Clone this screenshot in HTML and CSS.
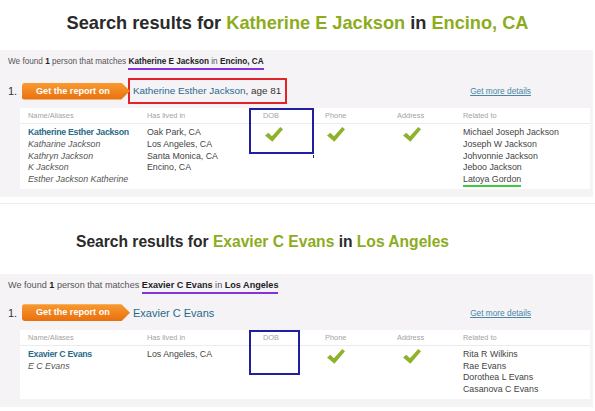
FILE: index.html
```html
<!DOCTYPE html>
<html lang="en">
<head>
  <meta charset="UTF-8" />
  <meta name="viewport" content="width=device-width, initial-scale=1" />
  <title>Search results</title>
  <link rel="stylesheet" href="styles.css">
</head>
<body>
  <div class="result">
    <h1 class="title">Search results for <em>Katherine E Jackson</em> in <em>Encino, CA</em></h1>
    <div class="panel">
      <p class="found">We found <b>1</b> person that matches <span class="hl-purple"><b>Katherine E Jackson</b> in <b>Encino, CA</b></span></p>
      <div class="report">
        <span class="num">1.</span>
        <a class="report-btn">Get the report on</a>
        <span class="person hl-red"><span class="person-name">Katherine Esther Jackson</span>, age 81</span>
        <a class="more">Get more details</a>
      </div>
      <div class="details">
        <div class="details-head">
          <span>Name/Aliases</span>
          <span>Has lived in</span>
          <span>DOB</span>
          <span>Phone</span>
          <span>Address</span>
          <span>Related to</span>
        </div>
        <div class="details-body">
          <div>
            <b>Katherine Esther Jackson</b>
            <i>Katharine Jackson</i>
            <i>Kathryn Jackson</i>
            <i>K Jackson</i>
            <i>Esther Jackson Katherine</i>
          </div>
          <div>
            <span>Oak Park, CA</span>
            <span>Los Angeles, CA</span>
            <span>Santa Monica, CA</span>
            <span>Encino, CA</span>
          </div>
          <div><svg class="check" viewBox="0 0 18 15"><path d="M0 8.4 L3.4 5.8 L6.9 9.2 L15.3 0 L18 2.2 L7.4 14.8 Z"/></svg></div>
          <div><svg class="check" viewBox="0 0 18 15"><path d="M0 8.4 L3.4 5.8 L6.9 9.2 L15.3 0 L18 2.2 L7.4 14.8 Z"/></svg></div>
          <div><svg class="check" viewBox="0 0 18 15"><path d="M0 8.4 L3.4 5.8 L6.9 9.2 L15.3 0 L18 2.2 L7.4 14.8 Z"/></svg></div>
          <div>
            <span>Michael Joseph Jackson</span>
            <span>Joseph W Jackson</span>
            <span>Johvonnie Jackson</span>
            <span>Jeboo Jackson</span>
            <span><span class="hl-green">Latoya Gordon</span></span>
          </div>
        </div>
        <div class="dob-mark tick"></div>
      </div>
    </div>
  </div>

  <div class="result">
    <h1 class="title title-small">Search results for <em>Exavier C Evans</em> in <em>Los Angeles</em></h1>
    <div class="panel">
      <p class="found found-big">We found <b>1</b> person that matches <span class="hl-purple"><b>Exavier C Evans</b> in <b>Los Angeles</b></span></p>
      <div class="report">
        <span class="num">1.</span>
        <a class="report-btn">Get the report on</a>
        <span class="person person-big"><span class="person-name">Exavier C Evans</span></span>
        <a class="more">Get more details</a>
      </div>
      <div class="details">
        <div class="details-head">
          <span>Name/Aliases</span>
          <span>Has lived in</span>
          <span>DOB</span>
          <span>Phone</span>
          <span>Address</span>
          <span>Related to</span>
        </div>
        <div class="details-body">
          <div>
            <b>Exavier C Evans</b>
            <i>E C Evans</i>
          </div>
          <div>
            <span>Los Angeles, CA</span>
          </div>
          <div></div>
          <div><svg class="check" viewBox="0 0 18 15"><path d="M0 8.4 L3.4 5.8 L6.9 9.2 L15.3 0 L18 2.2 L7.4 14.8 Z"/></svg></div>
          <div><svg class="check" viewBox="0 0 18 15"><path d="M0 8.4 L3.4 5.8 L6.9 9.2 L15.3 0 L18 2.2 L7.4 14.8 Z"/></svg></div>
          <div>
            <span>Rita R Wilkins</span>
            <span>Rae Evans</span>
            <span>Dorothea L Evans</span>
            <span>Casanova C Evans</span>
          </div>
        </div>
        <div class="dob-mark dob-narrow"></div>
      </div>
    </div>
  </div>
</body>
</html>
```

FILE: styles.css
```css
    body {
      font-family: "Liberation Sans", Arial, sans-serif;
      background: #fff;
      margin: 0;
      padding: 0;
      width: 595px;
    }

    .title {
      margin: 0;
      height: 50px;
      line-height: 46px;
      text-align: center;
      font-size: 18.2px;
      font-weight: bold;
      color: #2a2a2a;
    }

    .title em {
      font-style: normal;
      color: #8cac1e;
    }

    .title-small {
      height: auto;
      padding: 6px 70px 0 0;
      line-height: 64px;
      font-size: 15.6px;
    }

    .result + .result {
      margin-top: 6px;
      border-top: 1px solid #ececec;
    }

    .panel {
      background: #f5f3f6;
      margin-right: 2px;
      padding-bottom: 8px;
    }

    .found {
      margin: 0;
      padding-left: 8px;
      height: 24px;
      line-height: 24px;
      font-size: 8.2px;
      color: #555;
    }

    .found b {
      color: #222;
    }

    .found-big {
      height: 22px;
      line-height: 22px;
      font-size: 9.1px;
    }

    .hl-purple {
      border-bottom: 2px solid #8234d8;
      padding-bottom: 2px;
    }

    .report {
      display: flex;
      align-items: center;
      height: 34px;
    }

    .num {
      width: 22px;
      padding-left: 8px;
      box-sizing: border-box;
      font-size: 11px;
      color: #333;
    }

    .report-btn {
      width: 108px;
      height: 17px;
      line-height: 17px;
      padding-left: 14px;
      box-sizing: border-box;
      background: linear-gradient(#f99a30, #e8700e);
      border-radius: 3px 0 0 3px;
      clip-path: polygon(0 0, 92% 0, 100% 50%, 92% 100%, 0 100%);
      color: #fff;
      font-weight: bold;
      font-size: 9.1px;
    }

    .person {
      margin-left: -2px;
      height: 26px;
      line-height: 22px;
      padding: 0 4px 0 3px;
      box-sizing: border-box;
      border: 2px solid transparent;
      font-size: 9.9px;
      color: #333;
    }

    .person-name {
      color: #1f6b8e;
    }

    .person-big {
      font-size: 11px;
    }

    .hl-red {
      border-color: #e0242a;
    }

    .more {
      margin-left: auto;
      margin-right: 62px;
      font-size: 8.3px;
      color: #4a86a6;
      text-decoration: underline;
    }

    .details {
      position: relative;
      margin-left: 20px;
      margin-right: 3px;
      background: #fff;
    }

    .details-head,
    .details-body {
      display: grid;
      grid-template-columns: 120px 109px 65px 76px 65px 1fr;
    }

    .details-head {
      height: 15px;
      line-height: 15px;
      border-bottom: 1px solid #ececec;
      font-size: 7.4px;
      color: #a3a3a3;
    }

    .details-body {
      padding: 3px 0;
      font-size: 8.8px;
      line-height: 11.75px;
      color: #444;
    }

    .details-body b,
    .details-body i,
    .details-body span {
      display: block;
    }

    .details-body b {
      color: #2a6b8a;
      letter-spacing: -0.3px;
    }

    .details-body i {
      color: #555;
    }

    .details-head span:nth-child(1),
    .details-body > div:nth-child(1) { padding-left: 8px; }
    .details-head span:nth-child(2),
    .details-body > div:nth-child(2) { padding-left: 7px; }
    .details-head span:nth-child(3) { padding-left: 14px; }
    .details-head span:nth-child(4) { padding-left: 11px; }
    .details-head span:nth-child(5) { padding-left: 7px; }
    .details-head span:nth-child(6),
    .details-body > div:nth-child(6) { padding-left: 8px; }

    .details-body > div:nth-child(3) { padding-left: 16px; }
    .details-body > div:nth-child(4) { padding-left: 13px; }
    .details-body > div:nth-child(5) { padding-left: 13px; }

    .check {
      display: block;
      width: 18px;
      height: 15px;
      fill: #8fb22a;
    }

    .hl-green {
      display: inline !important;
      border-bottom: 2px solid #3ccc3c;
      padding-bottom: 1px;
    }

    /* annotation boxes */
    .dob-mark {
      position: absolute;
      left: 229px;
      top: 0;
      width: 65px;
      height: 46px;
      border: 2px solid #1f1fa0;
      box-sizing: border-box;
    }

    .tick::after {
      content: "";
      position: absolute;
      right: -2px;
      bottom: -6px;
      width: 1px;
      height: 3px;
      background: #1f1fa0;
    }

    .dob-narrow {
      width: 51px;
      height: 45px;
    }
```
